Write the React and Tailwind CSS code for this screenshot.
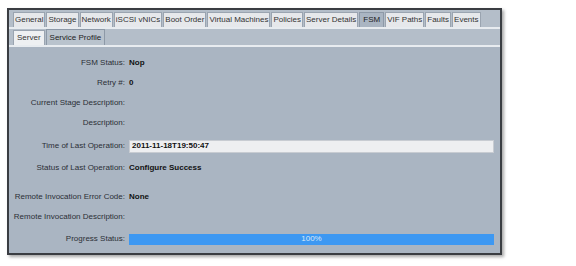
import React from "react";

const topTabs = [
  "General",
  "Storage",
  "Network",
  "iSCSI vNICs",
  "Boot Order",
  "Virtual Machines",
  "Policies",
  "Server Details",
  "FSM",
  "VIF Paths",
  "Faults",
  "Events",
];

function Row({ label, children, className = "" }) {
  return (
    <div className={"flex h-[20px] items-center " + className}>
      <div className="w-[116px] shrink-0 whitespace-nowrap text-right text-[#2a2f36]">{label}</div>
      <div className="ml-[4px] flex flex-1 items-center whitespace-nowrap font-bold text-[#111]">{children}</div>
    </div>
  );
}

export default function App() {
  return (
    <div
      className="h-[266px] w-[576px] overflow-hidden bg-white pl-[7px] pt-[8px] text-[8px] leading-none"
      style={{ fontFamily: "'Liberation Sans', Arial, sans-serif" }}
    >
      <div className="h-[247px] w-[495px] overflow-hidden border-2 border-[#3a3d42] bg-[#aab5c2] shadow-[2px_2px_3px_rgba(0,0,0,0.35)]">
        {/* top tab row */}
        <div className="flex h-[17px] items-end gap-[1px] bg-[#b4bec9] pl-[4px]">
          {topTabs.map((t) => (
            <div
              key={t}
              className={
                "flex h-[15px] items-center whitespace-nowrap border border-b-0 px-[1px] " +
                (t === "FSM"
                  ? "border-[#8d99a7] bg-[#aab5c2] px-[3px] text-[#222]"
                  : "border-[#9aa4b0] bg-[#e6e8eb] text-[#333]")
              }
            >
              {t}
            </div>
          ))}
        </div>
        <div className="h-[2px] bg-[#e8ecf0]" />
        {/* second tab row */}
        <div className="flex h-[16px] items-end gap-[1px] bg-[#b4bec9] pl-[4px]">
          <div className="flex h-[15px] items-center whitespace-nowrap border border-b-0 border-[#9aa4b0] bg-[#eef0f2] px-[3px] text-[#333]">
            Server
          </div>
          <div className="flex h-[16px] items-center whitespace-nowrap border border-b-0 border-[#8d99a7] bg-[#b9c3cd] px-[3px] text-[#222]">
            Service Profile
          </div>
        </div>
        <div className="h-[2px] bg-[#e8ecf0]" />
        {/* content */}
        <div className="pt-[6px]">
          <Row label="FSM Status:">Nop</Row>
          <Row label="Retry #:">0</Row>
          <Row label="Current Stage Description:"></Row>
          <Row label="Description:"></Row>
          <Row label="Time of Last Operation:" className="mt-[3px]">
            <div className="mr-[6px] flex h-[13px] flex-1 items-center border border-[#c8ccd2] bg-[#eeeff1] px-[2px]">
              2011-11-18T19:50:47
            </div>
          </Row>
          <Row label="Status of Last Operation:" className="mt-[2px]">Configure Success</Row>
          <Row label="Remote Invocation Error Code:" className="mt-[9px]">None</Row>
          <Row label="Remote Invocation Description:"></Row>
          <Row label="Progress Status:" className="mt-[2px]">
            <div className="mr-[6px] flex h-[11px] flex-1 items-center justify-center bg-[#3d98f2] font-normal text-[#dbe9f8]">
              100%
            </div>
          </Row>
          <div className="mt-[3px] whitespace-nowrap pl-[15px] font-bold text-[#111]">Scheduled FSM Tasks</div>
        </div>
      </div>
    </div>
  );
}
